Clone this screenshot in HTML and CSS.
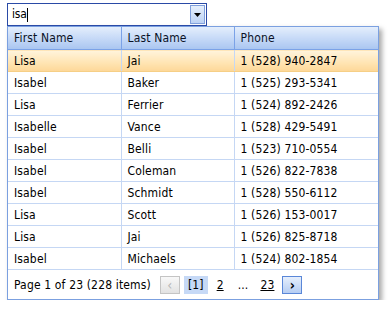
FILE: index.html
```html
<!DOCTYPE html>
<html lang="en">
<head>
    <meta charset="UTF-8">
    <title>Combo box grid</title>
    <link rel="stylesheet" href="styles.css">
</head>
<body>
    <div class="combo">
        <div class="combo-input">
            <span class="typed">isa</span><span class="caret"></span>
            <div class="drop-btn">
                <svg width="7" height="4" viewBox="0 0 7 4"><path d="M0 0h7L3.5 4z" fill="#000"/></svg>
            </div>
        </div>

        <div class="panel">
            <table class="grid">
                <colgroup>
                    <col class="c1"><col class="c2"><col class="c3">
                </colgroup>
                <thead>
                    <tr><th>First Name</th><th>Last Name</th><th>Phone</th></tr>
                </thead>
                <tbody>
                    <tr class="selected"><td>Lisa</td><td>Jai</td><td>1 (528) 940-2847</td></tr>
                    <tr><td>Isabel</td><td>Baker</td><td>1 (525) 293-5341</td></tr>
                    <tr><td>Lisa</td><td>Ferrier</td><td>1 (524) 892-2426</td></tr>
                    <tr><td>Isabelle</td><td>Vance</td><td>1 (528) 429-5491</td></tr>
                    <tr><td>Isabel</td><td>Belli</td><td>1 (523) 710-0554</td></tr>
                    <tr><td>Isabel</td><td>Coleman</td><td>1 (526) 822-7838</td></tr>
                    <tr><td>Isabel</td><td>Schmidt</td><td>1 (528) 550-6112</td></tr>
                    <tr><td>Lisa</td><td>Scott</td><td>1 (526) 153-0017</td></tr>
                    <tr><td>Lisa</td><td>Jai</td><td>1 (526) 825-8718</td></tr>
                    <tr><td>Isabel</td><td>Michaels</td><td>1 (524) 802-1854</td></tr>
                </tbody>
            </table>

            <!-- pager -->
            <div class="pager">
                <span class="summary">Page 1 of 23 (228 items)</span>
                <span class="pg-btn disabled">&lsaquo;</span>
                <span class="pg-current">[1]</span>
                <span class="pg-link">2</span>
                <span class="pg-dots">...</span>
                <span class="pg-link">23</span>
                <span class="pg-btn next">&rsaquo;</span>
            </div>
        </div>
    </div>
</body>
</html>
```

FILE: styles.css
```css
body {
    margin: 0;
    background: #fff;
    font-family: "DejaVu Sans Condensed", "DejaVu Sans", Verdana, sans-serif;
    font-size: 12px;
    letter-spacing: 0.15px;
    color: #000;
}
.combo {
    padding: 3px 0 0 7px;
}
.combo-input {
    position: relative;
    box-sizing: border-box;
    width: 200px;
    height: 23px;
    border: 1px solid #2a4aa6;
    padding: 3px 0 0 4px;
    line-height: 15px;
}
.typed {
    letter-spacing: -0.2px;
}
.caret {
    display: inline-block;
    width: 1px;
    height: 14px;
    background: #000;
    vertical-align: top;
    margin-top: 1px;
}
.drop-btn {
    position: absolute;
    right: 1px;
    top: 1px;
    box-sizing: border-box;
    width: 15px;
    height: 19px;
    border: 1px solid #7f9fdc;
    background: linear-gradient(#e6effc, #bcd2f4);
    display: flex;
    align-items: center;
    justify-content: center;
}
.panel {
    box-sizing: border-box;
    width: 372px;
    border: 1px solid #7ba0e0;
    box-shadow: 3px 3px 5px rgba(0, 0, 0, 0.35);
    background: #fff;
}
.grid {
    width: 100%;
    border-collapse: collapse;
    table-layout: fixed;
}
.c1, .c2 {
    width: 113px;
}
.grid th, .grid td {
    text-align: left;
    font-weight: normal;
    padding: 0 0 0 6px;
    white-space: nowrap;
    overflow: hidden;
}
.grid th {
    height: 22px;
    background: linear-gradient(#e4eefc, #c7daf7 50%, #aac6f1);
    border-right: 1px solid #7ba2e7;
    border-bottom: 1px solid #7ba2e7;
    color: #0a1226;
}
.grid td {
    height: 21px;
    border-right: 1px solid #c5d7f4;
    border-bottom: 1px solid #c5d7f4;
}
.grid th:last-child, .grid td:last-child {
    border-right: none;
}
.grid tr.selected td {
    background: linear-gradient(#fff4dc, #ffe4b2 60%, #fdd797);
    border-bottom-color: #f6cf86;
}
.pager {
    display: flex;
    align-items: center;
    height: 29px;
    padding-left: 6px;
}
.summary {
    margin-right: 9px;
}
.pg-btn {
    box-sizing: border-box;
    width: 20px;
    height: 18px;
    display: flex;
    align-items: center;
    justify-content: center;
    font-size: 14px;
    font-weight: bold;
    line-height: 1;
}
.pg-btn.disabled {
    border: 1px solid #c4c4c4;
    background: linear-gradient(#f8f8f8, #e2e2e2);
    color: #b6b6b6;
    font-weight: normal;
}
.pg-btn.next {
    border: 1px solid #5a87d8;
    background: linear-gradient(#e6effc, #b5cdf3);
    color: #000;
}
.pg-current {
    margin-left: 4px;
    padding: 0 4px;
    height: 18px;
    line-height: 18px;
    background: #c6d9f6;
}
.pg-link {
    text-decoration: underline;
    margin-left: 9px;
}
.pg-dots {
    margin-left: 14px;
    margin-right: 3px;
}
.pg-link + .pg-btn {
    margin-left: 8px;
}
```
